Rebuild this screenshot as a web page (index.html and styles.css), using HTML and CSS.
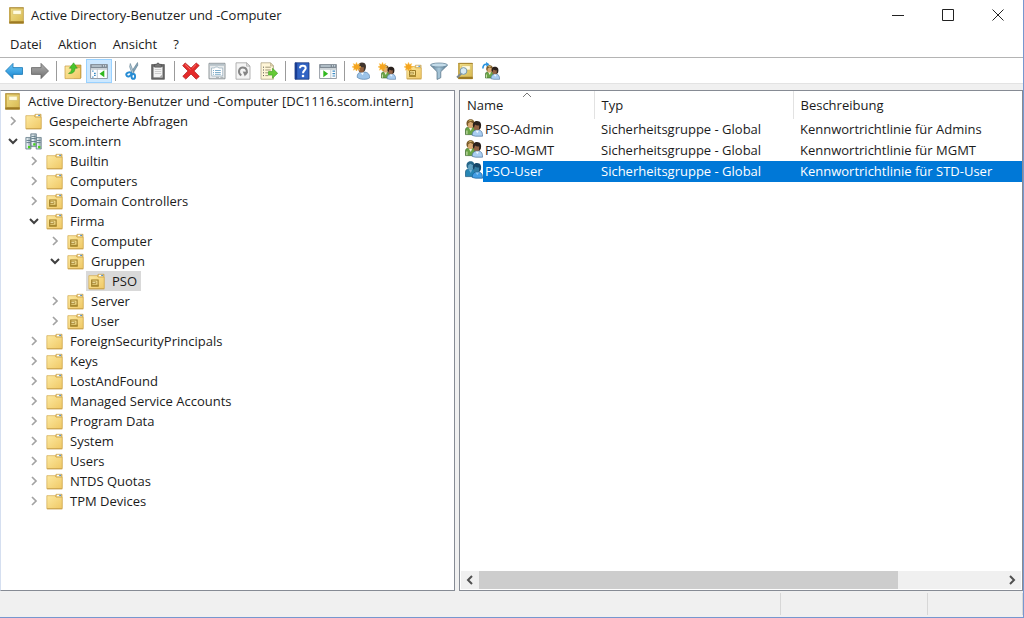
FILE: index.html
```html
<!DOCTYPE html>
<html lang="de">
<head>
<meta charset="UTF-8">
<meta name="viewport" content="width=device-width, initial-scale=1.0">
<title>Active Directory-Benutzer und -Computer</title>
<link rel="stylesheet" href="styles.css">
</head>
<body>

<!-- icon sprite -->
<svg class="sprite" aria-hidden="true">
<defs>
<linearGradient id="gold" x1="0" y1="0" x2="1" y2="1"><stop offset="0" stop-color="#f3e089"/><stop offset="1" stop-color="#d6b850"/></linearGradient>
<linearGradient id="yellow" x1="0" y1="0" x2="1" y2="1"><stop offset="0" stop-color="#fde9a0"/><stop offset="1" stop-color="#efc865"/></linearGradient>
<linearGradient id="blue" x1="0" y1="0" x2="0" y2="1"><stop offset="0" stop-color="#6cc8f8"/><stop offset="1" stop-color="#1684d0"/></linearGradient>
<linearGradient id="grey" x1="0" y1="0" x2="0" y2="1"><stop offset="0" stop-color="#b0b0b0"/><stop offset="1" stop-color="#707070"/></linearGradient>
<linearGradient id="steel" x1="0" y1="0" x2="1" y2="0"><stop offset="0" stop-color="#557790"/><stop offset=".5" stop-color="#a9c8da"/><stop offset="1" stop-color="#486b84"/></linearGradient>
</defs>
<symbol id="book" viewBox="0 0 16 16">
<path fill="url(#gold)" stroke="#b4933a" stroke-width=".6" d="M1.5.7h13v14.6h-13z"/>
<path fill="#9d7a23" d="M1.2 13.4h13.6v2.2H1.2zM1.2.4h13.6v.8H1.2z"/>
<path fill="#c4a444" d="M1.2 1h1.4v12.4H1.2z"/>
<path fill="#fffbe0" stroke="#d0b75a" stroke-width=".5" d="M4.5 3h8v4h-8z"/>
</symbol>
<symbol id="folder" viewBox="0 0 16 16">
<path fill="#e2bd62" stroke="#c79d46" stroke-width=".6" d="M8.5 3l1-1.8h5.6V14H8.5z"/>
<path fill="#fff" d="M10.2 1.7h4v1.5h-4z"/>
<path fill="#5294cc" d="M12.4 1.7h1.8v1.2h-1.8z"/>
<path fill="url(#yellow)" stroke="#d5ad55" stroke-width=".7" d="M.8 2.5h7.5l1.2 1.4h5.7v10.9H.8z"/>
<path fill="#c59c42" d="M1 14.5h14.4v.8H1z"/>
</symbol>
<symbol id="ou" viewBox="0 0 16 16">
<use href="#folder"/>
<path fill="#f5de8d" stroke="#9b7a25" d="M3.5 6.5h6v5.8h-6z"/>
<path fill="#a98a30" d="M3 11h7v1.8H3z"/>
<path fill="#fff5bf" stroke="#9b7a25" stroke-width=".7" d="M3.8 8.3h3.6v1.6H3.8z"/>
</symbol>
<symbol id="domain" viewBox="0 0 16 16">
<path fill="#aebcc2" stroke="#647b88" stroke-width=".7" d="M5.4.8h5.3v12H5.4zM.8 4.2h4.8v10.9H.8zM10.5 4.2h4.8v10.9h-4.8z"/>
<path fill="#e6eff3" d="M6.3 1.6h2v10h-2zM1.5 5h1.6v9.3H1.5zM11.2 5h1.6v9.3h-1.6z"/>
<path stroke="#557281" stroke-width=".8" d="M6 3.2h4M6 5.2h4M1.4 7h3.5M1.4 9h3.5M11.2 7h3.5M11.2 9h3.5M5.8 8h4.4"/>
<path fill="#46d51b" d="M7.7 9.7h2.2v2.1H7.7zM2.8 12.2H5v2.2H2.8zM12.3 12.2h2.2v2.2h-2.2z"/>
</symbol>
<symbol id="group" viewBox="0 0 18 18">
<path fill="#69a346" stroke="#39662a" stroke-width=".7" d="M.5 15.6V11c0-2 1.5-3 3.2-3h3.4c2 0 2.8 1.2 2.8 3v4.6z"/>
<path fill="#f4f6e8" d="M3.8 8.4h3.4L5.8 12z"/>
<path fill="#d8e8bd" d="M1.4 11.5h1v3.8h-1z"/>
<ellipse cx="5.5" cy="5" rx="3.4" ry="4" fill="#d9a972"/>
<path fill="#7a5a28" d="M1.9 6.6C.6 2.8 2.6.2 5.5.2c2.8 0 4.3 1.8 3.6 4.6L7.6 4 5.5 2.8 3.2 4.3l-.2 3z"/>
<path fill="#e8cf7c" d="M3.2 2.4C4.2.9 6.5.7 7.8 2L5.4 2z"/>
<ellipse cx="12" cy="7.2" rx="3.5" ry="4.3" fill="#946444"/>
<path fill="#2a211c" d="M8.2 8.2C7 4.4 8.8 2 12 2c3.5 0 5 2.8 3.7 7l-1.8 1.9.3-4.5c-1.8.3-3.2-.1-4.2-.9L9 8.4z"/>
<path fill="#a9cdf0" stroke="#4e769f" stroke-width=".7" d="M7.2 16.4c-.1-3.4 1.6-5.1 4-5.2h2.7c2.4.1 3.7 1.9 3.6 6h-7z"/>
<path fill="#f1f8ff" d="M10.5 11.4h3.5l-1.7 2.8z"/>
</symbol>
<symbol id="groupsel" viewBox="0 0 18 18">
<path fill="#2786b4" stroke="#17587e" stroke-width=".7" d="M.5 15.6V11c0-2 1.5-3 3.2-3h3.4c2 0 2.8 1.2 2.8 3v4.6z"/>
<path fill="#7eb8dc" d="M3.8 8.4h3.4L5.8 12z"/>
<ellipse cx="5.5" cy="5" rx="3.4" ry="4" fill="#62a2c2"/>
<path fill="#27678a" d="M1.9 6.6C.6 2.8 2.6.2 5.5.2c2.8 0 4.3 1.8 3.6 4.6L7.6 4 5.5 2.8 3.2 4.3l-.2 3z"/>
<ellipse cx="12" cy="7.2" rx="3.5" ry="4.3" fill="#357da3"/>
<path fill="#174769" d="M8.2 8.2C7 4.4 8.8 2 12 2c3.5 0 5 2.8 3.7 7l-1.8 1.9.3-4.5c-1.8.3-3.2-.1-4.2-.9L9 8.4z"/>
<path fill="#459ee5" stroke="#145d9b" stroke-width=".7" d="M7.2 16.4c-.1-3.4 1.6-5.1 4-5.2h2.7c2.4.1 3.7 1.9 3.6 6h-7z"/>
<path fill="#8dc8f5" d="M10.5 11.4h3.5l-1.7 2.8z"/>
</symbol>
<symbol id="star" viewBox="0 0 9 9">
<path fill="#f5a51f" stroke="#fcc75a" stroke-width=".4" d="M4.5.2l1 2.3 2.3-1-.9 2.4 2.3 1-2.3 1 .9 2.4-2.3-1-1 2.3-1-2.3-2.3 1 .9-2.4-2.3-1 2.3-1-.9-2.4 2.3 1z"/>
</symbol>
<symbol id="back" viewBox="0 0 18 18">
<path fill="url(#blue)" stroke="#1676b4" stroke-width=".8" stroke-linejoin="round" d="M.5 9L8 1.4v4.2h9.5v6.8H8v4.2z"/>
</symbol>
<symbol id="forward" viewBox="0 0 18 18">
<path fill="url(#grey)" stroke="#636363" stroke-width=".8" stroke-linejoin="round" d="M17.5 9L10 1.4v4.2H.5v6.8H10v4.2z"/>
</symbol>
<symbol id="up" viewBox="0 0 18 18">
<path fill="#d9b34c" stroke="#b58a2d" stroke-width=".6" d="M10 5l1-2h6v13h-7z"/>
<path fill="url(#yellow)" stroke="#c79c42" stroke-width=".7" d="M1 4h8l1.3 1.6h6.2v11H1z"/>
<path fill="#49c52d" stroke="#28901a" stroke-width=".5" d="M4.5 11.5c2.2-1 3.2-3 3.2-5.3H5.4L9.6.8l3.7 5.4H11c0 3.6-2.3 5.8-6.5 5.3z"/>
</symbol>
<symbol id="treepane" viewBox="0 0 18 18">
<path fill="#fff" stroke="#7d8790" stroke-width=".8" d="M.6 2.5h16.8v14H.6z"/>
<path fill="#7f8a94" d="M.6 2.5h16.8v3.7H.6z"/>
<path fill="#e0edf5" d="M1.7 3.5h10v.9h-10zM13 3.3h1.1v1.2H13zM15 3.3h1.2v1.2H15z"/>
<path fill="#c3cbd1" d="M1 6.2h16v1.6H1zM6.8 7.8h1v8.3h-1z"/>
<path stroke="#3b8ac2" stroke-width="1.2" d="M2.2 9.2h1.3M4 11.3h1.7M4 13.4h1.7M2.2 15.2h1.3"/>
<path fill="#31b81e" d="M14.3 8.2v7L9.5 11.7z"/>
</symbol>
<symbol id="actionpane" viewBox="0 0 18 18">
<path fill="#fff" stroke="#7d8790" stroke-width=".8" d="M.6 2.5h16.8v14H.6z"/>
<path fill="#7f8a94" d="M.6 2.5h16.8v3.7H.6z"/>
<path fill="#e0edf5" d="M1.7 3.5h10v.9h-10zM13 3.3h1.1v1.2H13zM15 3.3h1.2v1.2H15z"/>
<path fill="#c3cbd1" d="M1 6.2h16v1.6H1zM11.3 7.8h1v8.3h-1z"/>
<path stroke="#3b8ac2" stroke-width="1.2" d="M13.5 9.2h2.6M13.5 11.6h2.6M13.5 14h2.6"/>
<path fill="#31b81e" d="M4.3 8.2v7l4.8-3.5z"/>
</symbol>
<symbol id="cut" viewBox="0 0 18 18">
<path fill="#82a4b7" stroke="#506f83" stroke-width=".5" d="M14.5.5l.3 2.7L9.6 12 7.8 10.7z"/>
<path fill="#afc9d7" stroke="#506f83" stroke-width=".5" d="M7.3 1.5l3.8 9.8-2 .4-2.5-7z"/>
<ellipse cx="5.8" cy="12.3" rx="2.6" ry="1.9" transform="rotate(-25 5.8 12.3)" fill="none" stroke="#278cd4" stroke-width="1.9"/>
<ellipse cx="10.3" cy="14.4" rx="1.8" ry="2.4" fill="none" stroke="#278cd4" stroke-width="1.9"/>
</symbol>
<symbol id="clipboard" viewBox="0 0 18 18">
<path fill="#666" stroke="#484848" stroke-width=".6" d="M2.6 2.5h12.8v14.8H2.6z"/>
<path fill="#f3f3f3" d="M4.5 4.8h9v10.6h-9z"/>
<path fill="#777" stroke="#444" stroke-width=".5" d="M5.6 2.3h2C7.6.5 10.4.5 10.4 2.3h2v2.9H5.6z"/>
<path stroke="#bbb" stroke-width=".7" d="M5.8 7.5h6.4M5.8 9.5h6.4M5.8 11.5h6.4"/>
<path fill="#aaa" d="M10.2 15.4l3.3-3.2v3.2z"/>
</symbol>
<symbol id="delete" viewBox="0 0 18 18">
<path fill="#e52a2a" stroke="#ad1515" stroke-width=".7" stroke-linejoin="round" d="M3.2.9L9 6.1 14.2 1l3 2.5L12 8.9l5.3 5.5-3.1 2.8L9 12l-5.2 5.1-3-2.8L6 8.9.7 3.7z"/>
<path stroke="#ff8b80" stroke-width=".8" d="M3 2.4l5.4 5M14 2.5l-3.6 3.6"/>
</symbol>
<symbol id="properties" viewBox="0 0 18 18">
<path fill="#e7eaec" stroke="#858c90" stroke-width=".9" d="M1 1.3h16v15.5H1z"/>
<path fill="#b7c2c9" d="M1.5 1.8h15v2h-15z"/>
<path fill="#fff" stroke="#91a9b8" stroke-width=".7" d="M3.5 6h3l.8-1h2.6l.8 1h4v8h-11z"/>
<path stroke="#73a6c5" stroke-width=".9" d="M5 8.5h1M7 8.5h5.8M5 10.5h1M7 10.5h5.8M5 12.3h1M7 12.3h5.8"/>
<path stroke="#aab0b3" d="M8 15.4h3M12.4 15.4h3"/>
</symbol>
<symbol id="refresh" viewBox="0 0 18 18">
<path fill="#f4f4f4" stroke="#a1a1a1" stroke-width=".8" d="M2 .8h10.5L16 4.2v13H2z"/>
<path fill="#ddd" stroke="#a1a1a1" stroke-width=".6" d="M12.5.8v3.4H16z"/>
<path fill="none" stroke="#858585" stroke-width="2" d="M7.3 13.4C3.4 10.8 4.8 5.4 8.8 5.4c4.1 0 5.3 4.6 2.5 6.8"/>
<path fill="#858585" d="M8.8 9.4l5.2.6-3.2 4.6z"/>
</symbol>
<symbol id="export" viewBox="0 0 18 18">
<path fill="#fff6d8" stroke="#b0a688" stroke-width=".8" d="M1 .8h9.5L13.5 4v13.2H1z"/>
<path fill="#eadcae" stroke="#b0a688" stroke-width=".6" d="M10.5.8V4h3z"/>
<path stroke="#555" d="M3 5.2h1M3 8h1M3 10.8h1M3 13.6h1"/>
<path stroke="#a09777" d="M5.3 5.2h5.5M5.3 8h5.5M5.3 10.8h3M5.3 13.6h3"/>
<path fill="#65ca35" stroke="#389b20" stroke-width=".6" d="M8.5 9.5h4V6.2l5.2 5.1-5.2 5v-3.2h-4z"/>
</symbol>
<symbol id="help" viewBox="0 0 18 18">
<path fill="#3264c4" stroke="#18357b" stroke-width=".8" d="M2 .8h14v16.4H2z"/>
<path fill="#193d92" d="M2 .8h2.2v16.4H2z"/>
<path fill="none" stroke="#fff" stroke-width="2" d="M7 6.2C7 3 12.7 3 12.7 6.2c0 2-2.7 2.1-2.7 5"/>
<circle cx="10" cy="14" r="1.3" fill="#fff"/>
</symbol>
<symbol id="person" viewBox="0 0 18 18">
<path fill="#9dc4e8" stroke="#5581aa" stroke-width=".7" d="M5.2 15.3c-.2-3.4 1.5-5 4.2-5.2h3c3.4 0 5.5 2.4 5.2 5.8-2.8 2-9.4 2-12.4-.6z"/>
<path fill="#eff8ff" d="M8.6 10.4H12l-1.5 2.8z"/>
<ellipse cx="9.4" cy="5.8" rx="3.6" ry="4.8" fill="#94623e"/>
<path fill="#40352e" d="M6.4 3.6C6.4 1.4 8 .4 10 .4c3.7 0 5 3.4 3.2 7.6l-1.6 2.2.3-5c-2 .3-4.5-.2-5.5-1.6z"/>
</symbol>
<symbol id="newuser" viewBox="0 0 18 18"><use href="#person"/><use href="#star" width="9" height="9"/></symbol>
<symbol id="newgroup" viewBox="0 0 18 18"><use href="#group" x="3" y="3" width="15" height="15"/><use href="#star" width="9" height="9"/></symbol>
<symbol id="newou" viewBox="0 0 18 18"><use href="#ou" x="2" y="2" width="16" height="16"/><use href="#star" width="9" height="9"/></symbol>
<symbol id="filter" viewBox="0 0 18 18">
<path fill="url(#steel)" stroke="#577286" stroke-width=".7" d="M.6 3.3L7 9.7v7.8l3.8-1.8v-6l6.6-6.4z"/>
<ellipse cx="9" cy="3" rx="8.5" ry="2" fill="#c3dbe9" stroke="#5d7c92" stroke-width=".7"/>
</symbol>
<symbol id="find" viewBox="0 0 18 18">
<use href="#book" x="1" y="0" width="17" height="18"/>
<path stroke="#7c888f" stroke-width="2" d="M1 15.5l4.3-4"/>
<circle cx="7.5" cy="9" r="3.4" fill="#d7eaf5" stroke="#7898aa"/>
</symbol>
<symbol id="addtogroup" viewBox="0 0 18 18">
<use href="#group" x="3" y="3" width="15" height="15"/>
<path fill="none" stroke="#2893df" stroke-width="1.6" d="M.9 6.5C.8 3.6 2.2 2 4.6 2.2"/>
<path fill="#2893df" d="M4 0l3.5 2.3L4.3 4.8z"/>
</symbol>
<symbol id="closed" viewBox="0 0 10 10"><path fill="none" stroke="#a3a3a3" stroke-width="1.7" d="M3 1l4 4-4 4"/></symbol>
<symbol id="opened" viewBox="0 0 10 10"><path fill="none" stroke="#404040" stroke-width="2" d="M1 3l4 4 4-4"/></symbol>
</svg>

<header class="titlebar">
<svg class="icon"><use href="#book"/></svg>
<h1>Active Directory-Benutzer und -Computer</h1>
<div class="winbuttons">
<button aria-label="Minimieren"><svg viewBox="0 0 12 12"><path d="M0 6.5h12"/></svg></button>
<button aria-label="Maximieren"><svg viewBox="0 0 12 12"><path d="M.5.5h11v11H.5z"/></svg></button>
<button aria-label="Schließen"><svg viewBox="0 0 12 12"><path d="M.5.5l11 11M11.5.5l-11 11"/></svg></button>
</div>
</header>

<nav class="menu">
<button>Datei</button>
<button>Aktion</button>
<button>Ansicht</button>
<button>?</button>
</nav>

<div class="toolbar" role="toolbar">
<button aria-label="Zurück"><svg><use href="#back"/></svg></button>
<button aria-label="Vorwärts"><svg><use href="#forward"/></svg></button>
<span class="sep"></span>
<button aria-label="Eine Ebene nach oben"><svg><use href="#up"/></svg></button>
<button class="active" aria-label="Konsolenstruktur" aria-pressed="true"><svg><use href="#treepane"/></svg></button>
<span class="sep"></span>
<button aria-label="Ausschneiden"><svg><use href="#cut"/></svg></button>
<button aria-label="Einfügen"><svg><use href="#clipboard"/></svg></button>
<span class="sep"></span>
<button aria-label="Löschen"><svg><use href="#delete"/></svg></button>
<button aria-label="Eigenschaften"><svg><use href="#properties"/></svg></button>
<button aria-label="Aktualisieren"><svg><use href="#refresh"/></svg></button>
<button aria-label="Liste exportieren"><svg><use href="#export"/></svg></button>
<span class="sep"></span>
<button aria-label="Hilfe"><svg><use href="#help"/></svg></button>
<button aria-label="Aktionsbereich"><svg><use href="#actionpane"/></svg></button>
<span class="sep"></span>
<button aria-label="Neuer Benutzer"><svg><use href="#newuser"/></svg></button>
<button aria-label="Neue Gruppe"><svg><use href="#newgroup"/></svg></button>
<button aria-label="Neue Organisationseinheit"><svg><use href="#newou"/></svg></button>
<button aria-label="Filter"><svg><use href="#filter"/></svg></button>
<button aria-label="Suchen"><svg><use href="#find"/></svg></button>
<button aria-label="Zu Gruppe hinzufügen"><svg><use href="#addtogroup"/></svg></button>
</div>

<main class="panes">
<section class="tree">
<div class="node root"><svg class="icon"><use href="#book"/></svg><a href="#">Active Directory-Benutzer und -Computer [DC1116.scom.intern]</a></div>
<ul>
<li><div class="node"><button aria-label="Erweitern"><svg><use href="#closed"/></svg></button><svg class="icon"><use href="#folder"/></svg><a href="#">Gespeicherte Abfragen</a></div></li>
<li><div class="node"><button aria-label="Reduzieren"><svg><use href="#opened"/></svg></button><svg class="icon"><use href="#domain"/></svg><a href="#">scom.intern</a></div>
<ul>
<li><div class="node"><button aria-label="Erweitern"><svg><use href="#closed"/></svg></button><svg class="icon"><use href="#folder"/></svg><a href="#">Builtin</a></div></li>
<li><div class="node"><button aria-label="Erweitern"><svg><use href="#closed"/></svg></button><svg class="icon"><use href="#folder"/></svg><a href="#">Computers</a></div></li>
<li><div class="node"><button aria-label="Erweitern"><svg><use href="#closed"/></svg></button><svg class="icon"><use href="#ou"/></svg><a href="#">Domain Controllers</a></div></li>
<li><div class="node"><button aria-label="Reduzieren"><svg><use href="#opened"/></svg></button><svg class="icon"><use href="#ou"/></svg><a href="#">Firma</a></div>
<ul>
<li><div class="node"><button aria-label="Erweitern"><svg><use href="#closed"/></svg></button><svg class="icon"><use href="#ou"/></svg><a href="#">Computer</a></div></li>
<li><div class="node"><button aria-label="Reduzieren"><svg><use href="#opened"/></svg></button><svg class="icon"><use href="#ou"/></svg><a href="#">Gruppen</a></div>
<ul>
<li><div class="node leaf selected"><svg class="icon"><use href="#ou"/></svg><a href="#">PSO</a></div></li>
</ul>
</li>
<li><div class="node"><button aria-label="Erweitern"><svg><use href="#closed"/></svg></button><svg class="icon"><use href="#ou"/></svg><a href="#">Server</a></div></li>
<li><div class="node"><button aria-label="Erweitern"><svg><use href="#closed"/></svg></button><svg class="icon"><use href="#ou"/></svg><a href="#">User</a></div></li>
</ul>
</li>
<li><div class="node"><button aria-label="Erweitern"><svg><use href="#closed"/></svg></button><svg class="icon"><use href="#folder"/></svg><a href="#">ForeignSecurityPrincipals</a></div></li>
<li><div class="node"><button aria-label="Erweitern"><svg><use href="#closed"/></svg></button><svg class="icon"><use href="#folder"/></svg><a href="#">Keys</a></div></li>
<li><div class="node"><button aria-label="Erweitern"><svg><use href="#closed"/></svg></button><svg class="icon"><use href="#folder"/></svg><a href="#">LostAndFound</a></div></li>
<li><div class="node"><button aria-label="Erweitern"><svg><use href="#closed"/></svg></button><svg class="icon"><use href="#folder"/></svg><a href="#">Managed Service Accounts</a></div></li>
<li><div class="node"><button aria-label="Erweitern"><svg><use href="#closed"/></svg></button><svg class="icon"><use href="#folder"/></svg><a href="#">Program Data</a></div></li>
<li><div class="node"><button aria-label="Erweitern"><svg><use href="#closed"/></svg></button><svg class="icon"><use href="#folder"/></svg><a href="#">System</a></div></li>
<li><div class="node"><button aria-label="Erweitern"><svg><use href="#closed"/></svg></button><svg class="icon"><use href="#folder"/></svg><a href="#">Users</a></div></li>
<li><div class="node"><button aria-label="Erweitern"><svg><use href="#closed"/></svg></button><svg class="icon"><use href="#folder"/></svg><a href="#">NTDS Quotas</a></div></li>
<li><div class="node"><button aria-label="Erweitern"><svg><use href="#closed"/></svg></button><svg class="icon"><use href="#folder"/></svg><a href="#">TPM Devices</a></div></li>
</ul>
</li>
</ul>
</section>

<section class="list">
<table>
<colgroup><col class="colname"><col class="coltype"><col></colgroup>
<thead>
<tr>
<th aria-sort="ascending">Name<svg class="sort" viewBox="0 0 10 6"><path d="M1 5l4-4 4 4"/></svg></th>
<th>Typ</th>
<th>Beschreibung</th>
</tr>
</thead>
<tbody>
<tr><td><div class="item"><svg><use href="#group"/></svg><span>PSO-Admin</span></div></td><td>Sicherheitsgruppe - Global</td><td>Kennwortrichtlinie für Admins</td></tr>
<tr><td><div class="item"><svg><use href="#group"/></svg><span>PSO-MGMT</span></div></td><td>Sicherheitsgruppe - Global</td><td>Kennwortrichtlinie für MGMT</td></tr>
<tr class="selected"><td><div class="item"><svg><use href="#groupsel"/></svg><span>PSO-User</span></div></td><td>Sicherheitsgruppe - Global</td><td>Kennwortrichtlinie für STD-User</td></tr>
</tbody>
</table>
<div class="scrollbar">
<button aria-label="Nach links"><svg viewBox="0 0 10 10"><path d="M7 1L3 5l4 4"/></svg></button>
<div class="track"><div class="thumb"></div></div>
<button aria-label="Nach rechts"><svg viewBox="0 0 10 10"><path d="M3 1l4 4-4 4"/></svg></button>
</div>
</section>
</main>

<footer class="status">
<span></span>
<span></span>
<span></span>
</footer>

</body>
</html>
```

FILE: styles.css
```css
*{
box-sizing: border-box;
margin: 0; padding: 0;
}

body{
display: flex;
flex-direction: column;
height: 100vh;
overflow: hidden;
background: #f0f0f0;
border-right: 1px solid #7797cf;
border-bottom: 1px solid #7797cf;
color: #1b1b1b;
font: 13px/20px "Open Sans", "Noto Sans", sans-serif;
}

button{
border: none;
background: none;
font: inherit;
color: inherit;
}

a{
color: inherit;
text-decoration: none;
}

ul{
list-style: none;
}

.sprite{
position: absolute;
width: 0; height: 0;
}

.icon{
width: 17px; height: 17px;
flex: none;
}

/* title and menu */
.titlebar{
display: flex;
align-items: center;
height: 30px;
padding-left: 8px;
gap: 6px;
background: #fff;
}

.titlebar h1{
flex: 1;
font-size: 13px;
font-weight: normal;
}

.winbuttons{
display: flex;
height: 100%;
}

.winbuttons button{
display: flex;
align-items: center;
justify-content: center;
width: 50px;
}

.winbuttons svg{
width: 12px; height: 12px;
fill: none;
stroke: #222;
}

.menu{
display: flex;
height: 27px;
padding-left: 2px;
background: #fff;
}

.menu button{
padding: 0 8px;
}

/* toolbar */
.toolbar{
display: flex;
align-items: center;
height: 27px;
padding: 1px 0 0 1px;
border-top: 1px solid #b4b4b4;
border-bottom: 1px solid #e3e3e3;
background: #fff;
}

.toolbar button{
display: flex;
align-items: center;
justify-content: center;
width: 26px; height: 24px;
}

.toolbar .active{
background: #cce8ff;
border: 1px solid #99d1ff;
}

.toolbar svg{
width: 18px; height: 18px;
flex: none;
}

.sep{
width: 1px; height: 20px;
margin: 0 3px;
background: #9b9b9b;
}

/* panes */
.panes{
flex: 1;
display: flex;
gap: 4px;
min-height: 0;
padding-top: 6px;
}

.tree,.list{
background: #fff;
border: 1px solid #868b94;
}

.tree{
width: 455px;
flex: none;
border-left-color: #d5dff0;
overflow: hidden;
}

.tree ul ul{
padding-left: 21px;
}

.node{
display: flex;
align-items: center;
height: 20px;
white-space: nowrap;
}

.node button{
display: flex;
align-items: center;
justify-content: center;
width: 24px; height: 20px;
}

.node button svg{
width: 10px; height: 10px;
}

.node a{
padding: 0 4px 0 7px;
}

.root{
padding-left: 3px;
}

.leaf{
width: fit-content;
margin-left: 22px;
padding-left: 2px;
}

.leaf.selected{
background: #d9d9d9;
}

.list{
flex: 1;
display: flex;
flex-direction: column;
justify-content: space-between;
min-width: 0;
}

table{
width: 100%;
table-layout: fixed;
border-collapse: collapse;
}

.colname{
width: 134px;
}

.coltype{
width: 199px;
}

th,td{
padding: 0 7px;
text-align: left;
font-weight: normal;
white-space: nowrap;
}

th{
height: 28px;
position: relative;
border-right: 1px solid #e2e2e2;
}

th:last-child{
border-right: none;
}

.sort{
position: absolute;
top: 1px; left: 50%;
width: 10px; height: 6px;
margin-left: -5px;
fill: none;
stroke: #777;
}

td{
height: 21px;
vertical-align: top;
}

td:first-child{
padding: 0 0 0 5px;
}

.item{
display: flex;
height: 21px;
}

.item svg{
width: 18px; height: 18px;
flex: none;
}

.item span{
flex: 1;
padding-left: 2px;
}

.list .selected td + td,.selected .item span{
background: #0078d7;
color: #fff;
}

.scrollbar{
display: flex;
height: 18px;
margin: 0 1px 1px;
background: #f0f0f0;
}

.scrollbar button{
display: flex;
align-items: center;
justify-content: center;
width: 18px;
}

.scrollbar svg{
width: 10px; height: 10px;
fill: none;
stroke: #505050;
stroke-width: 2;
}

.track{
flex: 1;
}

.thumb{
width: 80%; height: 100%;
background: #cdcdcd;
}

/* status bar */
.status{
display: flex;
height: 26px;
padding: 2px 0;
}

.status span{
width: 147px;
border-right: 1px solid #d7d7d7;
}

.status span:first-child{
flex: 1;
}

.status span:last-child{
width: 95px;
}
```
